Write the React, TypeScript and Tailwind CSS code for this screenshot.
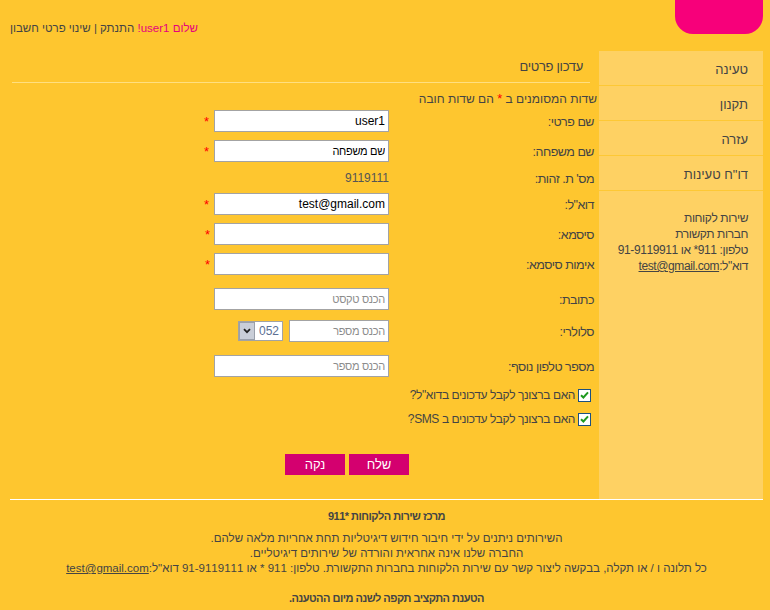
import React from "react";

function Check() {
  return (
    <div className="w-[13px] h-[13px] border border-[#1c5180] bg-white flex items-center justify-center shrink-0">
      <svg width="9" height="8" viewBox="0 0 9 8">
        <path d="M1 4.2 L3.4 6.5 L8 1.3" stroke="#1f9a1f" strokeWidth="2" fill="none" />
      </svg>
    </div>
  );
}

function Star({ className = "" }: { className?: string }) {
  return <span className={"text-[#f00] text-[13px] leading-[13px] " + className}>*</span>;
}

const inputCls =
  "w-[175px] h-[22px] border border-[#a3a3a3] bg-white px-[3px] text-[12px] text-black placeholder:text-[#8c8c8c] outline-none font-['Liberation_Sans',Arial,sans-serif]";
const inputHeb =
  "w-[175px] h-[22px] border border-[#a3a3a3] bg-white px-[3px] text-[11px] tracking-[-0.3px] text-black placeholder:text-[#8c8c8c] outline-none font-['Liberation_Sans',Arial,sans-serif]";

const labelCls = "w-[205px] text-[12.5px] tracking-[-0.5px] pt-[3px]";

export default function App() {
  return (
    <div
      dir="rtl"
      className="w-[770px] h-[610px] bg-[#fec62f] text-[#444] font-['Liberation_Sans',Arial,sans-serif] overflow-hidden"
    >
      <header className="h-[51px] flex justify-between items-start pr-[7px] pl-[10px]">
        <div className="w-[88px] h-[34px] bg-[#f7007a] rounded-b-[18px]" />
        <div className="pt-[21px] text-[11.5px] leading-[15px]">
          <span className="text-[#e6007e]">שלום user1!</span> התנתק | שינוי פרטי חשבון
        </div>
      </header>

      <div className="flex h-[448px] pl-[10px] pr-[7px]">
        <aside className="w-[164px] shrink-0 bg-[#fed163]">
          {["טעינה", "תקנון", "עזרה", 'דו"ח טעינות'].map((t) => (
            <div
              key={t}
              className="h-[35px] border-b border-[#fdc835] flex items-center pr-[15px] pt-[3px] text-[13px]"
            >
              {t}
            </div>
          ))}
          <div className="mt-[19px] pr-[15px] text-[12px] tracking-[-0.4px] leading-[16px] whitespace-nowrap">
            <div>שירות לקוחות</div>
            <div>חברות תקשורת</div>
            <div>טלפון: 911* או 91-9119911</div>
            <div>
              דוא"ל:<span className="underline">test@gmail.com</span>
            </div>
          </div>
        </aside>

        <main className="flex-1">
          <div className="ml-[2px] mr-[9px] h-[32px] border-b border-[#ffdf80] pr-[7px] pt-[8px] text-[13px] tracking-[-0.3px] leading-[16px]">
            עדכון פרטים
          </div>

          <div className="mt-[9px] pr-[2px] text-[12px] leading-[15px]">
            שדות המסומנים ב <Star /> הם שדות חובה
          </div>

          <div className="pr-[5px]">
            <div className="mt-[3px] flex items-center h-[22px]">
              <div className={labelCls}>שם פרטי:</div>
              <input className={inputCls} defaultValue="user1" readOnly />
              <Star className="mr-[5px]" />
            </div>
            <div className="mt-[8px] flex items-center h-[22px]">
              <div className={labelCls}>שם משפחה:</div>
              <input className={inputHeb} defaultValue="שם משפחה" readOnly />
              <Star className="mr-[5px]" />
            </div>
            <div className="mt-[5px] flex items-center h-[22px]">
              <div className={labelCls}>מס' ת. זהות:</div>
              <div className="w-[175px] text-[12px] text-[#555]">9119111</div>
            </div>
            <div className="mt-[4px] flex items-center h-[22px]">
              <div className={labelCls}>דוא"ל:</div>
              <input className={inputCls} defaultValue="test@gmail.com" readOnly />
              <Star className="mr-[5px]" />
            </div>
            <div className="mt-[8px] flex items-center h-[22px]">
              <div className={labelCls}>סיסמא:</div>
              <input className={inputCls} readOnly />
              <Star className="mr-[4px]" />
            </div>
            <div className="mt-[8px] flex items-center h-[22px]">
              <div className={labelCls}>אימות סיסמא:</div>
              <input className={inputCls} readOnly />
              <Star className="mr-[4px]" />
            </div>
            <div className="mt-[13px] flex items-center h-[22px]">
              <div className={labelCls}>כתובת:</div>
              <input className={inputHeb} placeholder="הכנס טקסט" readOnly />
            </div>
            <div className="mt-[10px] flex items-center h-[22px]">
              <div className={labelCls}>סלולרי:</div>
              <input
                className="w-[100px] h-[22px] border border-[#a3a3a3] bg-white px-[3px] text-[11px] tracking-[-0.3px] text-black placeholder:text-[#8c8c8c] outline-none font-['Liberation_Sans',Arial,sans-serif]"
                placeholder="הכנס מספר"
                readOnly
              />
              <div className="mr-[6px] w-[45px] h-[20px] border border-[#a3a3a3] bg-white flex items-center">
                <div className="flex-1 text-left pl-[4px] text-[12px] text-[#5b6f93]">052</div>
                <div className="w-[16px] h-[18px] bg-[#c9ced8] border border-[#9aa0ab] flex items-center justify-center">
                  <svg width="8" height="6" viewBox="0 0 8 6">
                    <path d="M1 1.2 L4 4.2 L7 1.2" stroke="#222" strokeWidth="1.8" fill="none" />
                  </svg>
                </div>
              </div>
            </div>
            <div className="mt-[13px] flex items-center h-[22px]">
              <div className={labelCls}>מספר טלפון נוסף:</div>
              <input className={inputHeb} placeholder="הכנס מספר" readOnly />
            </div>
          </div>

          <div className="pr-[8px]">
            <div className="mt-[10px] h-[16px] flex items-center gap-[3px] text-[12px] tracking-[-0.4px]">
              <Check />
              <span>האם ברצונך לקבל עדכונים בדוא"ל?</span>
            </div>
            <div className="mt-[8px] h-[16px] flex items-center gap-[3px] text-[12px] tracking-[-0.4px]">
              <Check />
              <span>האם ברצונך לקבל עדכונים ב SMS?</span>
            </div>
          </div>

          <div className="mt-[27px] pr-[190px] flex gap-[4px]">
            <button className="w-[60px] h-[21px] bg-[#d4006f] text-white text-[13px] leading-[21px]">שלח</button>
            <button className="w-[60px] h-[21px] bg-[#d4006f] text-white text-[13px] leading-[21px]">נקה</button>
          </div>
        </main>
      </div>

      <footer className="ml-[10px] mr-[7px] border-t border-white text-center text-[11.5px] leading-[15px] pt-[9px]">
        <div className="font-bold text-[11px] tracking-[-0.5px]">מרכז שירות הלקוחות *911</div>
        <div className="mt-[7px]">השירותים ניתנים על ידי חיבור חידוש דיגיטליות תחת אחריות מלאה שלהם.</div>
        <div>החברה שלנו אינה אחראית והורדה של שירותים דיגיטליים.</div>
        <div>
          כל תלונה ו / או תקלה, בבקשה ליצור קשר עם שירות הלקוחות בחברות התקשורת. טלפון: 911 * או 91-9119111 דוא"ל:
          <span className="underline">test@gmail.com</span>
        </div>
        <div className="mt-[15px] font-bold text-[11px] tracking-[-0.5px]">הטענת התקציב תקפה לשנה מיום ההטענה.</div>
      </footer>
    </div>
  );
}
